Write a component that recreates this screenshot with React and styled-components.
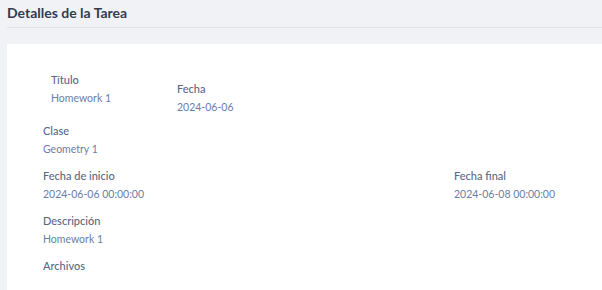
import React from 'react';
import styled, { createGlobalStyle } from 'styled-components';

const GlobalStyle = createGlobalStyle`
  body {
    margin: 0;
    background: #f1f2f6;
    font-family: Lato, "Open Sans", sans-serif;
    overflow: hidden;
  }
`;

const task = {
  titulo: 'Homework 1',
  fecha: '2024-06-06',
  clase: 'Geometry 1',
  inicio: '2024-06-06 00:00:00',
  final: '2024-06-08 00:00:00',
  descripcion: 'Homework 1',
};

const Field = ({ label, value, ...rest }) => (
  <FieldBox {...rest}>
    <Label>{label}</Label>
    {value && <Value>{value}</Value>}
  </FieldBox>
);

const App = () => (
  <>
    <GlobalStyle />
    <Page>
      <Header>
        <Title>Detalles de la Tarea</Title>
      </Header>
      <Card>
        <TopRow>
          <Field label="Título" value={task.titulo} $indent />
          <Field label="Fecha" value={task.fecha} $drop />
        </TopRow>
        <Field label="Clase" value={task.clase} />
        <DateRow>
          <Field label="Fecha de inicio" value={task.inicio} />
          <Field label="Fecha final" value={task.final} />
        </DateRow>
        <Field label="Descripción" value={task.descripcion} />
        <Field label="Archivos" />
      </Card>
    </Page>
  </>
);

const Page = styled.div`
  width: 602px;
  height: 290px;
  padding-left: 7px;
  box-sizing: border-box;
`;

const Header = styled.div`
  height: 27px;
  border-bottom: 1px solid #e2e4e9;
  display: flex;
  align-items: center;
  margin-bottom: 16px;
`;

const Title = styled.h1`
  margin: 0;
  margin-top: -3px;
  font-size: 14px;
  font-weight: 700;
  color: #343b4f;
`;

const Card = styled.div`
  background: #ffffff;
  margin-right: -20px;
  height: 260px;
  padding: 26px 0 0 36px;
  box-sizing: border-box;
  display: flex;
  flex-direction: column;
  gap: 7px;
`;

const TopRow = styled.div`
  display: grid;
  grid-template-columns: 134px auto;
  margin-bottom: -3px;
`;

const DateRow = styled.div`
  display: grid;
  grid-template-columns: 411px auto;
`;

const FieldBox = styled.div`
  display: flex;
  flex-direction: column;
  padding-left: ${(p) => (p.$indent ? '8px' : '0')};
  margin-top: ${(p) => (p.$drop ? '9px' : '0')};
`;

const Label = styled.span`
  font-size: 11px;
  line-height: 19px;
  font-weight: 500;
  color: #5a6885;
`;

const Value = styled.span`
  font-size: 10.5px;
  line-height: 19px;
  color: #6a7ea6;
`;

export default App;
